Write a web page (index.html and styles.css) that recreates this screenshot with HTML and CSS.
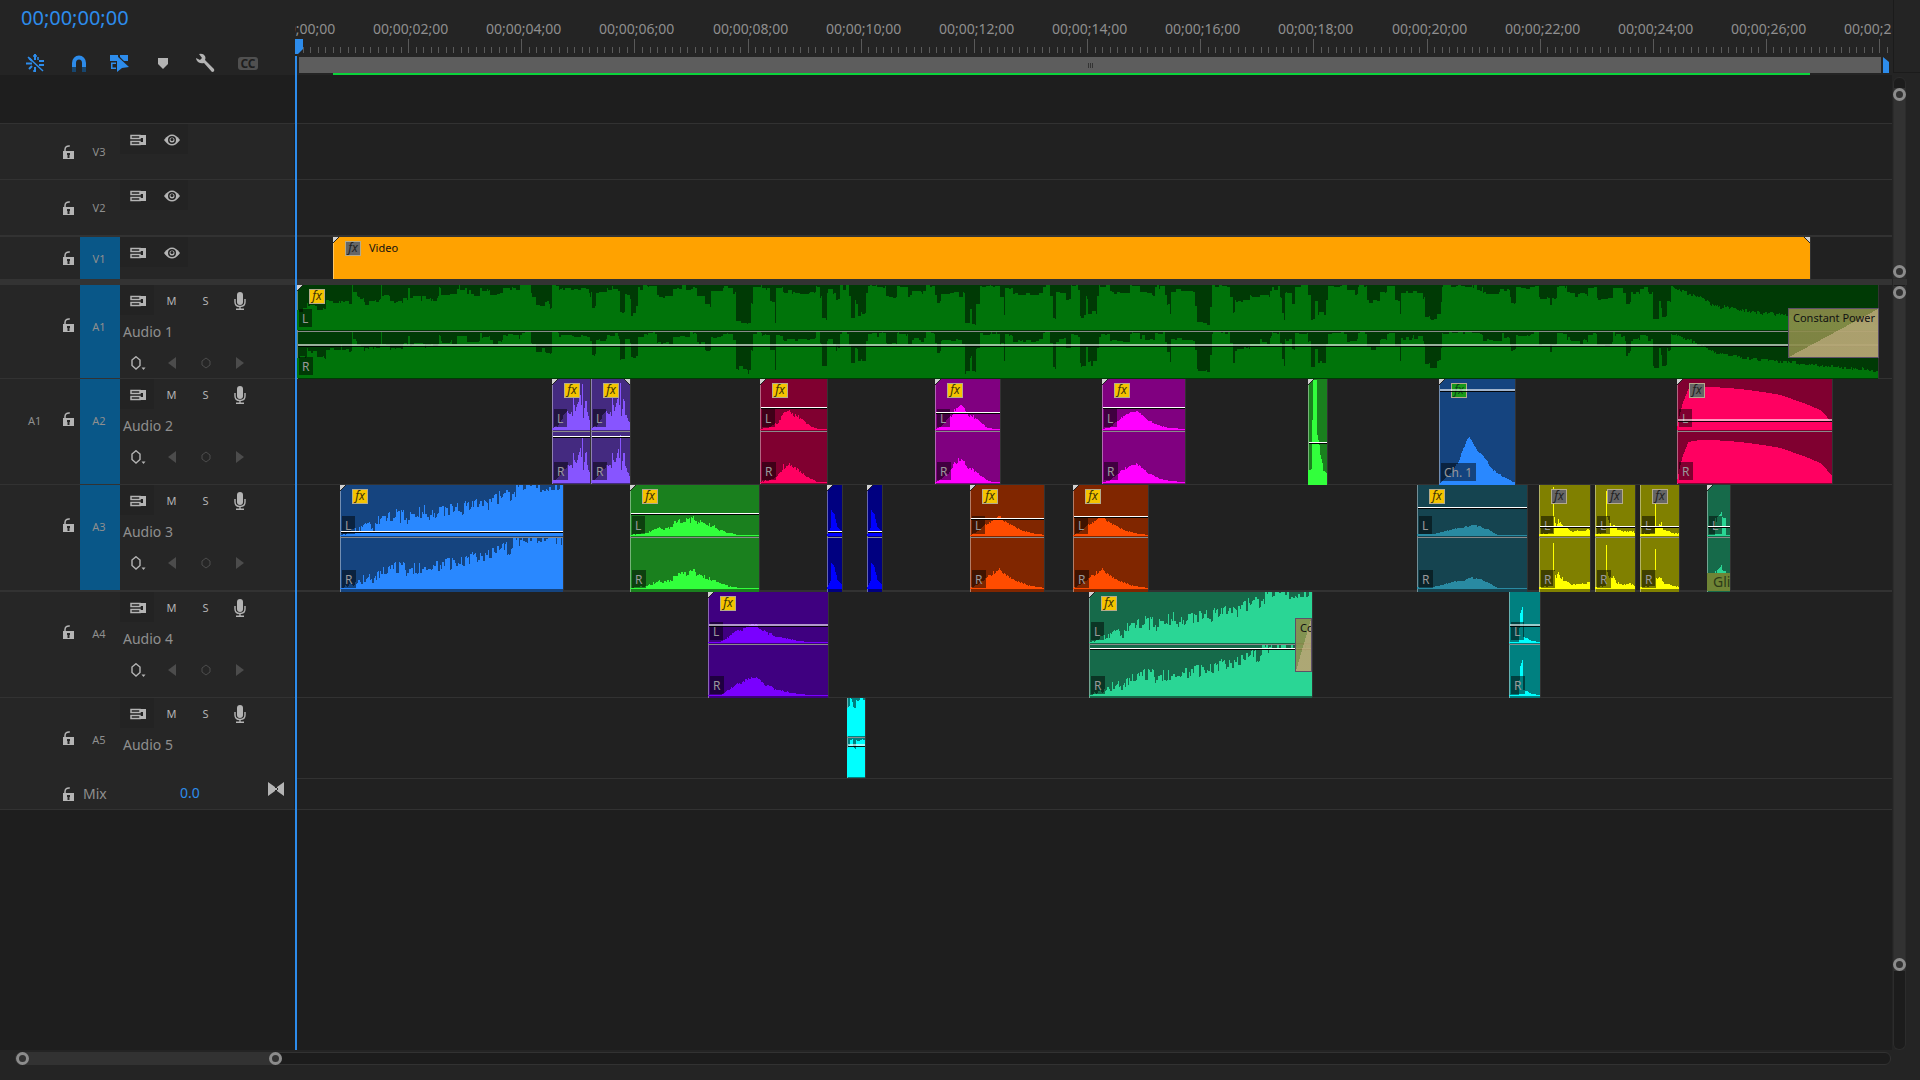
FILE: index.html
```html
<!DOCTYPE html>
<html lang="en">
<head>
    <meta charset="UTF-8">
    <meta name="viewport" content="width=device-width, initial-scale=1.0">
    <title>Timeline</title>
    <link rel="stylesheet" href="styles.css">
</head>
<body>
    <svg class="icon-defs" aria-hidden="true">
        <symbol id="lock" viewBox="0 0 12 14">
            <path d="M2 7V4.500C2 1.500 4 .8 6.800 1" fill="none" stroke="currentColor" stroke-width="1.500"/>
            <path d="M0 6h11v8H0z" fill="currentColor"/>
            <path d="M4 8h3v2H6.500v3h-2v-3H4z" fill="#262626"/>
        </symbol>
        <symbol id="sync" viewBox="0 0 16 12">
            <path d="M1 1.500h9v3H1zM1 7.500h9v3H1z" fill="none" stroke="currentColor" stroke-width="1.500"/>
            <path d="M10 1h6v10h-6V8h3V4h-3z" fill="currentColor"/>
        </symbol>
        <symbol id="eye" viewBox="0 0 16 12">
            <path d="M0 6Q4 .5 8 .5T16 6Q12 11.500 8 11.500T0 6z" fill="currentColor"/>
            <circle cx="8" cy="6" r="4" fill="#222"/>
            <circle cx="8" cy="6" r="2.500" fill="currentColor"/>
            <circle cx="8" cy="5.500" r="1.500" fill="#222"/>
        </symbol>
        <symbol id="mic" viewBox="0 0 12 18">
            <rect x="3" y="0" width="6" height="13" rx="3" fill="currentColor"/>
            <path d="M1 7v3q0 4.500 5 4.500t5-4.500V7M6 14v3M2 17.300h8" fill="none" stroke="currentColor" stroke-width="1.400"/>
        </symbol>
        <symbol id="keyframe" viewBox="0 0 16 14">
            <path d="M6 .7L10 4v5.500L6 13 2 9.500V4z" fill="none" stroke="currentColor" stroke-width="1.400"/>
            <path d="M11.500 11.500h4l-2 2.500z" fill="currentColor"/>
        </symbol>
        <symbol id="prev" viewBox="0 0 8 12"><path d="M8 0v12L0 6z" fill="currentColor"/></symbol>
        <symbol id="next" viewBox="0 0 8 12"><path d="M0 0v12l8-6z" fill="currentColor"/></symbol>
        <symbol id="diamond" viewBox="0 0 10 12"><path d="M5 1l4 3v4l-4 3-4-3V4z" fill="none" stroke="currentColor"/></symbol>
    </svg>

    <main class="panel">
        <div class="workspace">
            <div class="sequence">
                <header class="top">
                    <div class="controls">
                        <button class="timecode">00;00;00;00</button>
                        <div class="toolbar">
                            <button class="on" aria-label="Insert as nests">
                                <svg width="20" height="20" viewBox="0 0 20 20" fill="none" stroke="currentColor" stroke-width="2">
                                    <path d="M10 1v6M1 10.500h6M10 14v5M14 8h5M14 12h5M4 5l3 3M4 16l3-3"/>
                                    <path d="M3 4l15 14" stroke-width="1.500"/>
                                    <path d="M8 3h4M8 18h3M13 4v3" stroke-width="1.500"/>
                                </svg>
                            </button>
                            <button class="on" aria-label="Snap">
                                <svg width="20" height="20" viewBox="0 0 20 20" fill="none" stroke-width="4">
                                    <path d="M6 14V10a5 5.500 0 0 1 10 0v4" stroke="currentColor"/>
                                    <path d="M6 14v5M16 14v5" stroke="#17466f"/>
                                </svg>
                            </button>
                            <button class="on" aria-label="Linked selection">
                                <svg width="20" height="20" viewBox="0 0 20 20" fill="currentColor">
                                    <path d="M0 2h8v6H0zM10 2h8v6h-4l-4-4z"/>
                                    <path d="M1 9.500h5V11H2.500v3.500H6V16H1zM7 3l12 11-7 1-5 4z"/>
                                </svg>
                            </button>
                            <button aria-label="Add marker">
                                <svg width="20" height="20" viewBox="0 0 20 20" fill="currentColor"><path d="M5 5h10v6l-5 5-5-5z"/></svg>
                            </button>
                            <button aria-label="Timeline display settings">
                                <svg width="20" height="20" viewBox="0 0 20 20" fill="currentColor">
                                    <path d="M4 1q4-1 6 2 1 2 0 4l9 9q1 3-2 3l-8-9q-3 1-6-1-2-2-2-4l4 2 2-2z"/>
                                </svg>
                            </button>
                            <button class="captions" aria-label="Captions">CC</button>
                        </div>
                    </div>
                    <div class="ruler">
                        <div class="ruler-labels" id="rulerLabels"></div>
                        <svg class="ticks" id="ticks"></svg>
                        <div class="work-area">
                            <div class="work-bar"><i></i><i></i><i></i></div>
                            <svg class="out-point" width="6" height="16" viewBox="0 0 6 16"><path d="M0 0l6 5v11H0z" fill="#2d8ceb"/></svg>
                        </div>
                        <div class="render-bar"></div>
                        <svg class="playhead-grip" width="8" height="15" viewBox="0 0 8 15"><path d="M0 0h8v10l-5 5H0z" fill="#2d8ceb"/></svg>
                    </div>
                </header>

                <div class="empty-row"></div>

                <section class="track video v3">
                    <div class="head">
                        <span class="source"></span>
                        <button class="lock" aria-label="Lock V3"><svg width="12" height="14"><use href="#lock"/></svg></button>
                        <button class="target">V3</button>
                        <div class="options">
                            <button class="shade" aria-label="Sync lock V3"><svg width="16" height="12"><use href="#sync"/></svg></button>
                            <button class="shade" aria-label="Show V3"><svg width="16" height="12"><use href="#eye"/></svg></button>
                        </div>
                    </div>
                    <div class="lane" id="V3"></div>
                </section>

                <section class="track video v2">
                    <div class="head">
                        <span class="source"></span>
                        <button class="lock" aria-label="Lock V2"><svg width="12" height="14"><use href="#lock"/></svg></button>
                        <button class="target">V2</button>
                        <div class="options">
                            <button class="shade" aria-label="Sync lock V2"><svg width="16" height="12"><use href="#sync"/></svg></button>
                            <button class="shade" aria-label="Show V2"><svg width="16" height="12"><use href="#eye"/></svg></button>
                        </div>
                    </div>
                    <div class="lane" id="V2"></div>
                </section>

                <section class="track video v1">
                    <div class="head">
                        <span class="source"></span>
                        <button class="lock" aria-label="Lock V1"><svg width="12" height="14"><use href="#lock"/></svg></button>
                        <button class="target active">V1</button>
                        <div class="options">
                            <button class="shade" aria-label="Sync lock V1"><svg width="16" height="12"><use href="#sync"/></svg></button>
                            <button class="shade" aria-label="Show V1"><svg width="16" height="12"><use href="#eye"/></svg></button>
                        </div>
                    </div>
                    <div class="lane" id="V1"></div>
                </section>

                <div class="divider"></div>

                <section class="track audio a1">
                    <div class="head">
                        <span class="source"></span>
                        <button class="lock" aria-label="Lock A1"><svg width="12" height="14"><use href="#lock"/></svg></button>
                        <button class="target active">A1</button>
                        <div class="options">
                            <button class="shade" aria-label="Sync lock A1"><svg width="16" height="12"><use href="#sync"/></svg></button>
                            <button>M</button>
                            <button>S</button>
                            <button aria-label="Record A1"><svg width="12" height="18"><use href="#mic"/></svg></button>
                            <span class="name">Audio 1</span>
                            <button aria-label="Keyframes A1"><svg width="16" height="14"><use href="#keyframe"/></svg></button>
                            <button class="dim" aria-label="Previous keyframe A1"><svg width="8" height="12"><use href="#prev"/></svg></button>
                            <button class="dim" aria-label="Add keyframe A1"><svg width="10" height="12"><use href="#diamond"/></svg></button>
                            <button class="dim" aria-label="Next keyframe A1"><svg width="8" height="12"><use href="#next"/></svg></button>
                        </div>
                    </div>
                    <div class="lane" id="A1"></div>
                </section>

                <section class="track audio a2">
                    <div class="head">
                        <span class="source">A1</span>
                        <button class="lock" aria-label="Lock A2"><svg width="12" height="14"><use href="#lock"/></svg></button>
                        <button class="target active">A2</button>
                        <div class="options">
                            <button class="shade" aria-label="Sync lock A2"><svg width="16" height="12"><use href="#sync"/></svg></button>
                            <button>M</button>
                            <button>S</button>
                            <button aria-label="Record A2"><svg width="12" height="18"><use href="#mic"/></svg></button>
                            <span class="name">Audio 2</span>
                            <button aria-label="Keyframes A2"><svg width="16" height="14"><use href="#keyframe"/></svg></button>
                            <button class="dim" aria-label="Previous keyframe A2"><svg width="8" height="12"><use href="#prev"/></svg></button>
                            <button class="dim" aria-label="Add keyframe A2"><svg width="10" height="12"><use href="#diamond"/></svg></button>
                            <button class="dim" aria-label="Next keyframe A2"><svg width="8" height="12"><use href="#next"/></svg></button>
                        </div>
                    </div>
                    <div class="lane" id="A2"></div>
                </section>

                <section class="track audio a3">
                    <div class="head">
                        <span class="source"></span>
                        <button class="lock" aria-label="Lock A3"><svg width="12" height="14"><use href="#lock"/></svg></button>
                        <button class="target active">A3</button>
                        <div class="options">
                            <button class="shade" aria-label="Sync lock A3"><svg width="16" height="12"><use href="#sync"/></svg></button>
                            <button>M</button>
                            <button>S</button>
                            <button aria-label="Record A3"><svg width="12" height="18"><use href="#mic"/></svg></button>
                            <span class="name">Audio 3</span>
                            <button aria-label="Keyframes A3"><svg width="16" height="14"><use href="#keyframe"/></svg></button>
                            <button class="dim" aria-label="Previous keyframe A3"><svg width="8" height="12"><use href="#prev"/></svg></button>
                            <button class="dim" aria-label="Add keyframe A3"><svg width="10" height="12"><use href="#diamond"/></svg></button>
                            <button class="dim" aria-label="Next keyframe A3"><svg width="8" height="12"><use href="#next"/></svg></button>
                        </div>
                    </div>
                    <div class="lane" id="A3"></div>
                </section>

                <section class="track audio a4">
                    <div class="head">
                        <span class="source"></span>
                        <button class="lock" aria-label="Lock A4"><svg width="12" height="14"><use href="#lock"/></svg></button>
                        <button class="target">A4</button>
                        <div class="options">
                            <button class="shade" aria-label="Sync lock A4"><svg width="16" height="12"><use href="#sync"/></svg></button>
                            <button>M</button>
                            <button>S</button>
                            <button aria-label="Record A4"><svg width="12" height="18"><use href="#mic"/></svg></button>
                            <span class="name">Audio 4</span>
                            <button aria-label="Keyframes A4"><svg width="16" height="14"><use href="#keyframe"/></svg></button>
                            <button class="dim" aria-label="Previous keyframe A4"><svg width="8" height="12"><use href="#prev"/></svg></button>
                            <button class="dim" aria-label="Add keyframe A4"><svg width="10" height="12"><use href="#diamond"/></svg></button>
                            <button class="dim" aria-label="Next keyframe A4"><svg width="8" height="12"><use href="#next"/></svg></button>
                        </div>
                    </div>
                    <div class="lane" id="A4"></div>
                </section>

                <section class="track audio a5">
                    <div class="head">
                        <span class="source"></span>
                        <button class="lock" aria-label="Lock A5"><svg width="12" height="14"><use href="#lock"/></svg></button>
                        <button class="target">A5</button>
                        <div class="options">
                            <button class="shade" aria-label="Sync lock A5"><svg width="16" height="12"><use href="#sync"/></svg></button>
                            <button>M</button>
                            <button>S</button>
                            <button aria-label="Record A5"><svg width="12" height="18"><use href="#mic"/></svg></button>
                            <span class="name">Audio 5</span>
                        </div>
                    </div>
                    <div class="lane" id="A5"></div>
                </section>

                <section class="track mix">
                    <div class="head">
                        <span class="source"></span>
                        <button class="lock" aria-label="Lock mix"><svg width="12" height="14"><use href="#lock"/></svg></button>
                        <span class="mix-name">Mix</span>
                        <button class="mix-level">0.0</button>
                        <button class="mix-fold" aria-label="Expand mix track">
                            <svg width="16" height="14" viewBox="0 0 16 14" fill="currentColor"><path d="M0 0l7 5v4l-7 5zM16 0L9 5v4l7 5zM6 6h4v2H6z"/></svg>
                        </button>
                    </div>
                    <div class="lane"></div>
                </section>

                <div class="playhead"></div>
            </div>

            <aside class="vscroll">
                <div class="corner"></div>
                <div class="bar video-bar"><div class="thumb"><i class="ring"></i><i class="ring"></i></div></div>
                <div class="bar-divider"></div>
                <div class="bar audio-bar"><div class="thumb"><i class="ring"></i><i class="ring"></i></div></div>
            </aside>
        </div>

        <footer class="hscroll">
            <div class="hbar"><div class="thumb"><i class="ring"></i><i class="ring"></i></div></div>
        </footer>
    </main>

    <script src="timeline.js"></script>
</body>
</html>
```
FILE: styles.css
```css
* {
    box-sizing: border-box;
}
body {
    margin: 0;
    background-color: #242424;
    color: #8f8f8f;
    font-family: "Noto Sans", "Open Sans", sans-serif;
    font-size: 14px;
}
button {
    display: flex;
    align-items: center;
    justify-content: center;
    margin: 0;
    padding: 0;
    border: none;
    background: none;
    color: #b4b4b4;
    font-family: inherit;
    font-size: 11px;
    cursor: pointer;
}
svg {
    display: block;
}
.icon-defs {
    position: absolute;
    width: 0;
    height: 0;
}
.panel {
    display: flex;
    flex-direction: column;
    min-height: 100vh;
}
.workspace {
    display: flex;
    flex: 1;
}
.sequence {
    position: relative;
    display: flex;
    flex: 1;
    flex-direction: column;
    min-width: 0;
    background-color: #1e1e1e;
}

/* timecode, tools and ruler */
.top {
    display: grid;
    grid-template-columns: 295px 1fr;
    height: 75px;
    background-color: #242424;
}
.controls {
    padding: 4px 37px 0 21px;
}
.timecode {
    color: #2d8ceb;
    font-size: 20px;
    line-height: 28px;
}
.toolbar {
    display: flex;
    justify-content: space-between;
    margin: 21px 0 0 4px;
}
.toolbar button {
    width: 20px;
    height: 20px;
}
.toolbar .on {
    color: #2d8ceb;
}
.toolbar .captions {
    height: 13px;
    margin-top: 4px;
    border-radius: 3px;
    background-color: #505050;
    color: #1e1e1e;
    font-size: 12px;
    font-weight: bold;
}
.ruler {
    position: relative;
    display: flex;
    flex-direction: column;
    min-width: 0;
    overflow: hidden;
}
.ruler-labels {
    position: relative;
    height: 39px;
}
.ruler-labels span {
    position: absolute;
    top: 19px;
    line-height: 20px;
    white-space: nowrap;
}
.ticks {
    width: 100%;
    height: 17px;
}
.work-area {
    display: flex;
    gap: 2px;
    height: 17px;
    padding: 1px 3px 0 4px;
}
.work-bar {
    display: flex;
    flex: 1;
    align-items: center;
    justify-content: center;
    gap: 1px;
    background-color: #5d5d5d;
}
.work-bar i {
    width: 1px;
    height: 5px;
    background-color: #333;
}
.render-bar {
    height: 2px;
    margin: 0 82px 0 38px;
    background-color: #0bd43b;
}
.playhead-grip {
    position: absolute;
    top: 39px;
    left: 0;
}
.playhead {
    position: absolute;
    top: 56px;
    bottom: 0;
    left: 295px;
    width: 2px;
    background-color: #2d8ceb;
}

/* tracks */
.empty-row {
    height: 49px;
    border-bottom: 1px solid #323232;
}
.track {
    display: grid;
    grid-template-columns: 295px 1fr;
    border-bottom: 1px solid #323232;
    background-color: #212121;
}
.v3 {
    height: 56px;
}
.v2 {
    height: 57px;
    border-bottom-width: 2px;
}
.v1 {
    height: 42px;
    border-bottom: none;
}
.a1 {
    height: 94px;
}
.a2,
.a4 {
    height: 106px;
}
.a3 {
    height: 107px;
    border-bottom-width: 2px;
}
.a5 {
    height: 81px;
}
.mix {
    height: 31px;
}
.divider {
    height: 6px;
    background-color: #333;
}
.head {
    display: grid;
    grid-template-columns: 56px 24px 40px 1fr;
    border-right: 1px solid #1e1e1e;
    background-color: #262626;
    font-size: 11px;
}
.source {
    padding-left: 28px;
}
.lock {
    padding-left: 2px;
}
.target {
    padding-right: 2px;
    color: #8f8f8f;
}
.target.active {
    background-color: #095788;
}
.audio .source,
.audio .target {
    align-items: flex-start;
    padding-top: 34px;
    line-height: 16px;
}
.audio .lock {
    align-items: flex-start;
    padding-top: 33px;
}
.options {
    display: grid;
    grid-template-columns: repeat(4, 34px);
    grid-template-rows: 30px 32px 31px;
}
.options button {
    padding: 1px 0 0 1px;
}
.video .options {
    grid-template-rows: 30px;
}
.shade {
    background-color: #232323;
}
.name {
    grid-column: 1 / -1;
    padding-left: 3px;
    font-size: 14px;
    line-height: 34px;
}
.options .dim {
    color: #4c4c4c;
}
.mix .head {
    grid-template-columns: 56px 24px 100px 78px 1fr;
}
.mix-name {
    padding-left: 3px;
    font-size: 14px;
    line-height: 30px;
}
.mix-level {
    justify-content: flex-start;
    padding-bottom: 3px;
    color: #2d8ceb;
    font-size: 14px;
}
.mix-fold {
    align-items: flex-start;
    padding-top: 3px;
}
.lane {
    position: relative;
    min-width: 0;
}

/* clips */
.clip {
    position: absolute;
    top: 0;
    box-shadow: 1px 0 #333;
    overflow: hidden;
}
.clip::before {
    content: "";
    position: absolute;
    top: 0;
    left: 0;
    bottom: 0;
    width: 1px;
    background-color: rgba(255, 255, 255, 0.4);
}
.clip.trim-in::after {
    content: "";
    position: absolute;
    top: 0;
    left: 0;
    width: 6px;
    height: 6px;
    background: linear-gradient(135deg, #d0d0d0 45%, #222 45%, #222 55%, transparent 55%);
}
.trim-out {
    position: absolute;
    top: 0;
    right: 0;
    width: 6px;
    height: 6px;
    background: linear-gradient(225deg, #d0d0d0 45%, #222 45%, #222 55%, transparent 55%);
}
.wave {
    position: absolute;
    top: 0;
    left: 0;
}
.fx {
    position: absolute;
    top: 4px;
    left: 12px;
    width: 16px;
    height: 15px;
    border: 1px solid #b5ab8c;
    background-color: #f5c400;
    color: #3d3208;
    font-size: 12px;
    font-style: italic;
    line-height: 12px;
    text-align: center;
}
.fx.grey {
    background-color: #666;
    color: #222;
}
.fx.green {
    background-color: #189a18;
    color: #0c3f1c;
}
.title {
    position: absolute;
    top: 3px;
    left: 36px;
    color: #111;
    font-size: 11px;
    line-height: 16px;
}
.channel {
    position: absolute;
    left: 2px;
    height: 18px;
    padding: 0 4px 0 3px;
    background-color: rgba(0, 0, 0, 0.5);
    color: #999;
    font-size: 12px;
    line-height: 20px;
    white-space: nowrap;
}
.channel.upper {
    bottom: calc(50% + 5px);
}
.channel.lower {
    bottom: 4px;
}
.middle {
    position: absolute;
    left: 0;
    right: 0;
    height: 1px;
    background-color: #8a8a8a;
}
.level {
    position: absolute;
    left: 1px;
    right: 0;
    height: 2px;
    border-top: 1px solid #fff;
    background-color: #000;
}
.level.soft {
    height: 3px;
    border-top: 2px solid rgba(255, 255, 255, 0.6);
    background-color: rgba(0, 0, 0, 0.9);
    background-clip: padding-box;
}
.transition {
    position: absolute;
    padding-left: 4px;
    border: 1px solid #5d5068;
    background: linear-gradient(to bottom right, rgba(140, 140, 74, 0.9) 50%, rgba(180, 165, 115, 0.95) 50%);
    color: #111;
    font-size: 11px;
    line-height: 18px;
    white-space: nowrap;
    overflow: hidden;
}
.label-tag {
    position: absolute;
    right: 0;
    bottom: 1px;
    left: 0;
    padding-left: 6px;
    background-color: #6f8435;
    color: #2c3a18;
    font-size: 14px;
    line-height: 18px;
}

/* scroll and zoom bars */
.vscroll {
    display: flex;
    flex-direction: column;
    width: 28px;
    padding-left: 1px;
}
.corner {
    height: 73px;
    margin-bottom: 4px;
    border-bottom: 1px solid #1b1b1b;
    border-left: 1px solid #1b1b1b;
}
.bar {
    width: 13px;
    border: 1px solid #2c2c2c;
    background-color: #1c1c1c;
}
.thumb {
    display: flex;
    flex-direction: column;
    align-items: center;
    justify-content: space-between;
    background-color: #323232;
}
.ring {
    flex: none;
    width: 13px;
    height: 13px;
    border: 3px solid #8c8c8c;
    border-radius: 7px;
    background-color: #323232;
}
.video-bar {
    height: 202px;
    padding-top: 10px;
    border-radius: 6px 6px 0 0;
}
.video-bar .thumb {
    height: 190px;
}
.bar-divider {
    width: 14px;
    height: 6px;
    background-color: #333;
}
.audio-bar {
    flex: 1;
    padding: 1px 0 78px;
    border-top: none;
    border-radius: 0 0 6px 6px;
}
.audio-bar .thumb {
    height: 100%;
}
.hscroll {
    height: 30px;
    padding: 2px 29px 0 15px;
}
.hbar {
    height: 13px;
    border: 1px solid #323232;
    border-radius: 6px;
    background-color: #1c1c1c;
}
.hbar .thumb {
    flex-direction: row;
    width: 266px;
    height: 11px;
    border-radius: 6px;
}
```
FILE: timeline.js
```js
// envelopes are flat lists: x, height, x, height ...
var swell = [0, 0, 16, 7, 33, 12, 50, 19, 58, 22, 75, 20, 90, 23, 110, 26, 120, 24, 135, 33, 145, 33, 160, 38, 172, 46, 185, 52, 200, 50, 223, 52];
var hit = [0, 1, 6, 4, 12, 8, 17, 13, 22, 15, 30, 20, 38, 12, 48, 7, 60, 3, 75, 1];

// depth of the music track below full scale
var music = [0, 25, 10, 20, 20, 24, 27, 26, 29, 17, 43, 17, 52, 20, 54, 20, 55, 0, 56, 8, 60, 12, 67, 16, 83, 15, 84, 0, 85, 12, 93, 17, 106, 12, 110, 14, 111, 2, 113, 12,
    120, 12, 136, 14, 141, 12, 142, 3, 144, 10, 153, 9, 160, 4, 170, 9, 182, 8, 183, 0, 185, 5, 193, 9, 206, 4, 223, 0, 231, 1, 234, 12, 239, 20, 253, 25, 254, 24, 255, 0, 262, 4,
    289, 4, 293, 8, 295, 24, 298, 22, 299, 8, 310, 4, 321, 7, 323, 28, 327, 28, 328, 10, 333, 10, 334, 27, 339, 20, 341, 1, 350, 2, 360, 11, 376, 4, 396, 2, 400, 10, 408, 18, 413, 20, 414, 5,
    426, 2, 436, 8, 439, 37, 450, 38, 454, 18, 456, 1, 465, 4, 473, 17, 478, 38, 479, 3, 486, 8, 513, 7, 519, 1, 523, 12, 525, 34, 529, 35, 530, 8, 539, 15, 543, 1, 552, 12,
    554, 34, 557, 34, 558, 16, 561, 28, 566, 28, 569, 8, 571, 1, 586, 2, 589, 12, 598, 12, 600, 1, 611, 11, 615, 7, 628, 7, 629, 1, 638, 10, 640, 20, 643, 18, 644, 8, 666, 8,
    668, 38, 672, 38, 673, 25, 675, 40, 678, 40, 679, 17, 683, 2, 693, 1, 703, 12, 707, 30, 708, 3, 716, 9, 742, 7, 746, 1, 753, 10, 756, 34, 758, 35, 759, 8, 769, 15, 774, 1,
    781, 8, 783, 34, 787, 34, 789, 15, 791, 30, 796, 30, 800, 12, 802, 1, 813, 8, 830, 9, 833, 1, 843, 7, 856, 8, 858, 1, 868, 10, 870, 20, 873, 30, 874, 7, 896, 8, 898, 22, 900, 38, 910, 40,
    913, 22, 915, 1, 933, 12, 936, 28, 938, 16, 953, 11, 973, 5, 975, 1, 983, 12, 985, 28, 987, 35, 988, 8, 995, 18, 998, 1, 1011, 10, 1014, 35, 1017, 35, 1018, 16, 1021, 30, 1025, 30,
    1029, 15, 1031, 1, 1050, 9, 1060, 8, 1061, 1, 1070, 15, 1083, 7, 1090, 1, 1098, 15, 1103, 30, 1104, 7, 1118, 7, 1126, 12, 1128, 32, 1133, 35, 1140, 28, 1144, 16, 1145, 1, 1183, 2,
    1186, 8, 1203, 5, 1213, 12, 1214, 18, 1218, 17, 1219, 3, 1233, 2, 1242, 13, 1246, 13, 1253, 20, 1255, 13, 1259, 12, 1260, 2, 1270, 8, 1290, 10, 1291, 2, 1300, 13, 1316, 3, 1326, 8,
    1329, 20, 1333, 18, 1334, 8, 1343, 3, 1351, 8, 1356, 35, 1361, 35, 1362, 15, 1364, 22, 1365, 35, 1369, 34, 1370, 17, 1373, 17, 1374, 1, 1383, 5, 1390, 8, 1403, 12, 1416, 20, 1436, 24, 1463, 28, 1490, 30, 1530, 34, 1560, 37, 1581, 40];

var colors = {
    green: ['#003a05', '#00740a'], purple: ['#442a80', '#8755ff'], crimson: ['#800030', '#ff0061'],
    magenta: ['#800080', '#ff00ff'], lime: ['#1a801e', '#32ff3c'], blue: ['#15447f', '#2988ff'],
    navy: ['#000080', '#0000ff'], orange: ['#802600', '#ff4c00'], teal: ['#154450', '#298aa2'],
    yellow: ['#808000', '#ffff00'], sea: ['#166a4a', '#2ad695'], violet: ['#3f0080', '#7a00ff'],
    cyan: ['#008080', '#00ffff'], video: ['#ffa200', '#ffa200']
};

var clips = [
    { track: 'V1', x: 38, w: 1477, h: 42, color: 'video', fx: 'grey', title: 'Video', trim: 'both' },

    { track: 'A1', x: 2, w: 1581, h: 94, color: 'green', fx: 'yellow', level: 59, soft: true, depth: true, blocksUntil: 1374, wave: music, noise: 3, trim: 'in' },

    { track: 'A2', x: 257, w: 38, h: 105, color: 'purple', fx: 'yellow', level: 57, trim: 'in', noise: 4,
        wave: [0, 2, 5, 4, 10, 12, 16, 19, 20, 16, 21, 32, 23, 18, 28, 34, 29, 24, 30, 46, 31, 14, 33, 32, 34, 32, 35, 18, 38, 6] },
    { track: 'A2', x: 296, w: 39, h: 105, color: 'purple', fx: 'yellow', level: 57, trim: 'out', noise: 4,
        wave: [0, 2, 5, 4, 10, 12, 16, 19, 20, 16, 21, 32, 23, 18, 27, 34, 28, 24, 29, 46, 30, 14, 32, 32, 33, 32, 34, 18, 39, 4] },
    { track: 'A2', x: 465, w: 67, h: 105, color: 'crimson', fx: 'yellow', level: 28, trim: 'in', noise: 5,
        wave: [0, 1, 10, 3, 18, 8, 22, 15, 32, 19, 40, 11, 50, 4, 57, 1, 67, 1] },
    { track: 'A2', x: 640, w: 65, h: 105, color: 'magenta', fx: 'yellow', level: 33, trim: 'in', noise: 4,
        wave: [0, 1, 5, 3, 15, 13, 19, 20, 26, 24, 31, 18, 42, 10, 51, 3, 58, 1, 65, 1] },
    { track: 'A2', x: 807, w: 83, h: 105, color: 'magenta', fx: 'yellow', level: 28, trim: 'in', noise: 2,
        wave: [0, 1, 7, 2, 14, 8, 20, 13, 28, 17, 34, 20, 45, 10, 58, 4, 68, 2, 83, 1] },
    { track: 'A2', x: 1013, w: 19, h: 106, color: 'lime', mono: true, level: 63, trim: 'in', noise: 1,
        wave: [0, 15, 3, 16, 4, 65, 5, 105, 8, 105, 9, 50, 11, 40, 12, 30, 14, 22, 15, 14, 19, 12] },
    { track: 'A2', x: 1144, w: 76, h: 106, color: 'blue', fx: 'green', mono: true, channel: 'Ch. 1', level: 10, soft: true, trim: 'in', noise: 2,
        wave: [0, 1, 10, 10, 20, 25, 26, 42, 30, 48, 34, 41, 38, 34, 44, 28, 54, 15, 64, 8, 76, 2] },
    { track: 'A2', x: 1382, w: 155, h: 105, color: 'crimson', fx: 'grey', level: 40, soft: true, trim: 'in', noise: 0,
        wave: [0, 4, 2, 14, 5, 26, 11, 41, 22, 43, 36, 43, 63, 41, 85, 38, 103, 35, 126, 27, 143, 20, 155, 7] },

    { track: 'A3', x: 45, w: 223, h: 107, color: 'blue', fx: 'yellow', level: 46, wave: swell, noise: 12, trim: 'in' },
    { track: 'A3', x: 335, w: 129, h: 107, color: 'lime', fx: 'yellow', level: 28, trim: 'in', noise: 5,
        wave: [0, 1, 15, 3, 30, 8, 42, 8, 44, 14, 55, 15, 64, 18, 72, 13, 84, 9, 98, 3, 108, 1, 129, 1] },
    { track: 'A3', x: 532, w: 15, h: 107, color: 'navy', level: 46, wave: [0, 2, 3, 8, 4, 26, 7, 22, 10, 9, 15, 4], noise: 1, trim: 'in', unlabelled: true },
    { track: 'A3', x: 572, w: 15, h: 107, color: 'navy', level: 46, wave: [0, 2, 3, 8, 4, 26, 7, 22, 10, 9, 15, 4], noise: 1, trim: 'in', unlabelled: true },
    { track: 'A3', x: 675, w: 74, h: 107, color: 'orange', fx: 'yellow', level: 33, wave: hit, noise: 3, trim: 'in' },
    { track: 'A3', x: 778, w: 75, h: 107, color: 'orange', fx: 'yellow', level: 31, wave: hit, noise: 3, trim: 'in' },
    { track: 'A3', x: 1122, w: 110, h: 107, color: 'teal', fx: 'yellow', level: 22, noise: 2,
        wave: [0, 2, 15, 2, 25, 4, 35, 7, 45, 8, 54, 11, 65, 9, 72, 6, 80, 1, 110, 1] },
    { track: 'A3', x: 1244, w: 51, h: 107, color: 'yellow', fx: 'grey', level: 41, noise: 4,
        wave: [0, 2, 13, 3, 14, 48, 15, 18, 17, 12, 19, 16, 24, 9, 32, 5, 45, 5, 51, 7] },
    { track: 'A3', x: 1300, w: 40, h: 107, color: 'yellow', fx: 'grey', level: 41, noise: 4,
        wave: [0, 2, 10, 3, 11, 43, 12, 18, 14, 12, 18, 12, 22, 6, 28, 4, 34, 6, 40, 3] },
    { track: 'A3', x: 1345, w: 39, h: 107, color: 'yellow', fx: 'grey', level: 41, noise: 4,
        wave: [0, 2, 14, 3, 15, 40, 16, 12, 18, 10, 21, 13, 23, 6, 30, 4, 39, 2] },
    { track: 'A3', x: 1412, w: 23, h: 107, color: 'sea', level: 41, noise: 1, trim: 'in', tag: 'Gli',
        wave: [0, 1, 7, 1, 8, 18, 9, 14, 10, 19, 13, 22, 14, 24, 15, 19, 18, 18, 19, 1, 23, 1] },

    { track: 'A4', x: 413, w: 120, h: 106, color: 'violet', fx: 'yellow', level: 32, soft: true, trim: 'in', noise: 3,
        wave: [0, 1, 12, 1, 20, 6, 30, 13, 38, 16, 47, 19, 55, 12, 70, 6, 85, 3, 100, 1, 120, 1] },
    { track: 'A4', x: 794, w: 223, h: 106, color: 'sea', fx: 'yellow', level: 56, wave: swell, noise: 12, trim: 'in' },
    { track: 'A4', x: 1214, w: 31, h: 106, color: 'cyan', level: 32, soft: true, noise: 1,
        wave: [0, 1, 9, 1, 11, 30, 13, 36, 14, 6, 18, 5, 22, 2, 31, 1] },

    { track: 'A5', x: 552, w: 18, h: 80, color: 'cyan', level: 46, soft: true, depth: true, noise: 2, unlabelled: true,
        wave: [0, 10, 2, 7, 3, 1, 5, 3, 6, 9, 8, 10, 9, 2, 11, 4, 13, 1, 18, 1] }
];

var transitions = [
    { track: 'A1', x: 1493, w: 91, y: 23, h: 50, text: 'Constant Power' },
    { track: 'A4', x: 1000, w: 17, y: 26, h: 54, text: 'Constant Power' }
];

function add(parent, className, text) {
    var el = document.createElement('div');
    el.className = className;
    if (text) {
        el.textContent = text;
    }
    parent.appendChild(el);
    return el;
}

function valueAt(points, x, blocksUntil) {
    for (var i = 2; i < points.length; i += 2) {
        if (x < points[i]) {
            if (x < blocksUntil) {
                return points[i - 1];
            }
            var t = (x - points[i - 2]) / (points[i] - points[i - 2]);
            return points[i - 1] + t * (points[i + 1] - points[i - 1]);
        }
    }
    return points[points.length - 1];
}

// one channel, drawn as one column for each pixel
function channelPath(clip, base, max, seed) {
    var d = 'M0 ' + base;
    var jitter = 0;
    var hold = 0;
    var blocksUntil = clip.blocksUntil || 0;
    function random() {
        seed = (seed * 16807) % 2147483647;
        return seed / 2147483647;
    }
    for (var x = 0; x < clip.w; x++) {
        if (hold <= 0) {
            jitter = (random() - 0.5) * clip.noise;
            // loud peaks and gaps now and then
            if (random() > 0.8) {
                jitter *= x < blocksUntil ? 3 : 1.6;
            }
            hold = 1 + Math.floor(random() * (x < blocksUntil ? 5 : 2));
        }
        hold--;
        var v = valueAt(clip.wave, x, blocksUntil);
        if (clip.depth) {
            v = max - v + jitter;
        } else {
            v += jitter * Math.min(1, v / 14);
        }
        v = Math.round(Math.max(1, Math.min(max, v)));
        d += 'V' + (base - v) + 'H' + (x + 1);
    }
    return d + 'V' + base + 'z';
}

function drawClip(clip) {
    var el = add(document.getElementById(clip.track), 'clip');
    var color = colors[clip.color];
    el.style.left = clip.x + 'px';
    el.style.width = clip.w + 'px';
    el.style.height = clip.h + 'px';
    el.style.backgroundColor = color[0];
    if (clip.trim === 'in' || clip.trim === 'both') {
        el.classList.add('trim-in');
    }

    if (clip.wave) {
        var middle = Math.floor((clip.h - 1) / 2);
        if (clip.h > 100) {
            middle = 52;
        }
        var bottom = clip.h > 105 ? 104 : clip.h - 1;
        var path = clip.mono
            ? channelPath(clip, clip.h, clip.h, 77)
            : channelPath(clip, middle - 1, middle - 1, 1234567) + channelPath(clip, bottom, bottom - middle - 1, 9876543);
        el.innerHTML = '<svg class="wave" width="' + clip.w + '" height="' + clip.h + '" shape-rendering="crispEdges">' +
            '<path d="' + path + '" fill="' + color[1] + '"/></svg>';
        if (!clip.mono) {
            add(el, 'middle').style.top = middle + 'px';
            if (!clip.unlabelled) {
                add(el, 'channel upper', 'L');
            }
            if (!clip.unlabelled && !clip.tag) {
                add(el, 'channel lower', 'R');
            }
        }
        if (clip.channel) {
            add(el, 'channel lower', clip.channel);
        }
    }
    if (clip.fx) {
        add(el, 'fx ' + clip.fx, 'fx');
    }
    if (clip.level) {
        add(el, clip.soft ? 'level soft' : 'level').style.top = clip.level + 'px';
    }
    if (clip.title) {
        add(el, 'title', clip.title);
    }
    if (clip.tag) {
        add(el, 'label-tag', clip.tag);
    }
    if (clip.trim === 'out' || clip.trim === 'both') {
        add(el, 'trim-out');
    }
}

function drawTransition(item) {
    var el = add(document.getElementById(item.track), 'transition', item.text);
    el.style.left = item.x + 'px';
    el.style.top = item.y + 'px';
    el.style.width = item.w + 'px';
    el.style.height = item.h + 'px';
}

// two seconds between labels, fifteen ticks in each
function drawRuler() {
    var step = 113.15;
    var labels = document.getElementById('rulerLabels');
    var path = '';
    for (var i = 0; i < 15; i++) {
        var seconds = i * 2;
        var label = document.createElement('span');
        label.textContent = '00;00;' + (seconds < 10 ? '0' : '') + seconds + ';00';
        label.style.left = Math.round(i * step) - 35 + 'px';
        labels.appendChild(label);
        for (var j = 0; j < 15; j++) {
            var x = Math.round((i + j / 15) * step);
            if (x < 1595) {
                path += 'M' + x + (j ? ' 8h1v6h-1z' : ' 0h1v14h-1z');
            }
        }
    }
    document.getElementById('ticks').innerHTML = '<path d="' + path + '" fill="#5a5a5a" shape-rendering="crispEdges"/>';
}

drawRuler();
clips.forEach(drawClip);
transitions.forEach(drawTransition);
```
